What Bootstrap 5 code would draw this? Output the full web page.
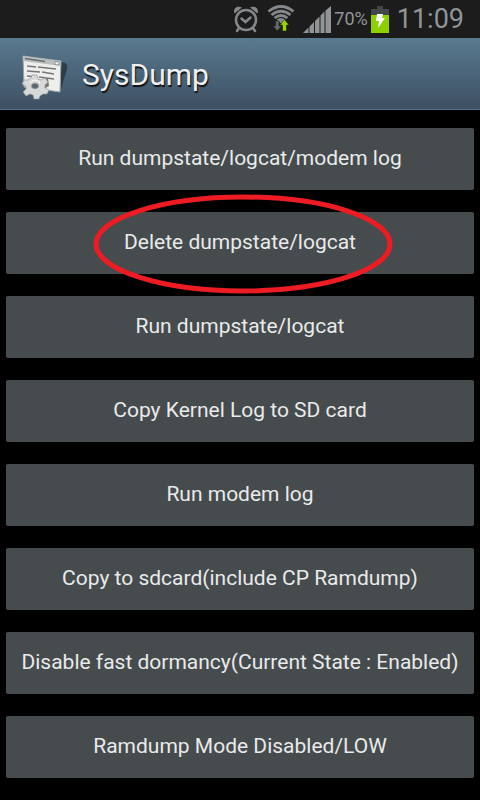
<!DOCTYPE html>
<html lang="en">
<head>
<meta charset="utf-8">
<meta name="viewport" content="width=device-width, initial-scale=1">
<title>SysDump</title>
<link href="https://cdn.jsdelivr.net/npm/bootstrap@5.3.0/dist/css/bootstrap.min.css" rel="stylesheet">
<style>
  body { background: #000; font-family: Roboto, "Liberation Sans", sans-serif; }
  .status-bar { background: #1c1c1c; color: #929598; height: 38px; padding: 0 16px; gap: 8px; line-height: 1; }
  .battery-group { gap: 3px; }
  .battery-text { font-size: 18px; }
  .clock { font-size: 27px; }
  .title-bar { background: linear-gradient(#587990, #3e5062); border-bottom: 1px solid #52708a; height: 72px; padding: 2px 20px 0; gap: 12px; }
  .title-bar h1 { font-size: 30px; line-height: 36px; color: #f0f0f0; text-shadow: 1px 2px 1px #111; }
  .actions { padding: 18px 6px; gap: 22px; }
  .btn-dump { --bs-btn-color: #e9eaea; --bs-btn-bg: #464b4e; --bs-btn-hover-color: #fff; --bs-btn-hover-bg: #555b5f;
    --bs-btn-active-color: #fff; --bs-btn-active-bg: #33b5e5; --bs-btn-border-width: 0; --bs-btn-border-radius: 2px;
    --bs-btn-font-size: 21px; --bs-btn-line-height: 30px; padding: 15px 8px 17px; }
  .highlight-ring { left: 50%; top: 50%; width: 300px; height: 100px; margin: -49px 0 0 -147px; pointer-events: none; z-index: 2; }
</style>
<script defer src="https://cdn.jsdelivr.net/npm/bootstrap@5.3.0/dist/js/bootstrap.bundle.min.js"></script>
</head>
<body>
<header>
  <div class="status-bar d-flex align-items-center justify-content-end">
    <svg width="26" height="28" viewBox="0 0 26 28" fill="none" stroke="#85888a" stroke-width="2.500" aria-label="Alarm" role="img">
      <circle cx="13" cy="15" r="10"/>
      <path d="M8.500 13.500l4 3.500 5-4.500M6 23l-2 3M20 23l2 3" stroke-linecap="round"/>
      <path d="M1.500 8.500C-.5 4 4 0 9 2.500zM24.500 8.500C26.500 4 22 0 17 2.500z" fill="#85888a" stroke="none"/>
    </svg>
    <svg width="28" height="28" viewBox="0 0 28 28" fill="none" aria-label="Wi-Fi" role="img">
      <g stroke="#85888a" stroke-width="2.800">
        <path d="M1.500 6.500Q14 -3.500 26.500 6.500M4.500 10Q14 2.500 23.500 10M7.500 13Q14 8 20.500 13"/>
      </g>
      <path d="M9.500 14.500Q14 11.500 18.500 14.500L14 18.500z" fill="#85888a"/>
      <path d="M8.500 16h3.500v5h2.500L10.250 26 6 21h2.500z" fill="#62676a" stroke="#1c1c1c" stroke-width=".5"/>
      <path d="M17.500 14.500l4.500 5.500h-2.500v6h-4v-6h-2.500z" fill="#99d600" stroke="#1c1c1c" stroke-width=".5"/>
    </svg>
    <div class="battery-group d-flex align-items-center">
      <svg width="28" height="27" viewBox="0 0 28 27" fill="#929598" aria-label="Signal" role="img">
        <path d="M0 27l5.500-5.500V27zM6.500 27v-6.500L11 16V27zM12 27V15l4.500-4.500v16.500zM17.500 27V9.500L21.500 5.500v21.500zM22.500 27V4.500L28 0v27z"/>
      </svg>
      <span class="battery-text">70%</span>
      <svg width="18" height="27" viewBox="0 0 18 27" aria-label="Charging" role="img">
        <path d="M0 3h6V0h6v3h6v6H0z" fill="#42464a"/>
        <path d="M0 9h18v18H0z" fill="#8fd000"/>
        <path d="M6 8h6l-1 4h3L7 22l1-7H5z" fill="#fff"/>
      </svg>
    </div>
    <time class="clock">11:09</time>
  </div>
  <div class="title-bar d-flex align-items-center">
    <svg width="50" height="50" viewBox="0 0 50 50" aria-hidden="true">
      <path d="M40 12q9 0 7 7l-6 20-8 3z" fill="#27323c" opacity=".8"/>
      <path d="M3 6l38 5-1 31-36-5z" fill="#eeeeed" stroke="#9aa2a6"/>
      <path d="M3 6l38 5v5L3 11z" fill="#b9bdbe"/>
      <path d="M5 8.500l20 3" stroke="#686e70" stroke-width="1.500"/>
      <path d="M35 11.500l4 .5v3l-4-.5z" fill="#f4f4f4" stroke="#747a7d" stroke-width=".7"/>
      <path d="M7 16l9 1m2 0l18 2M7 21l13 1m2 0l12 2M7 26l10 1m2 0l15 2" stroke="#777" stroke-width="1.500"/>
      <path d="M22 30l6-2 1 8-5 3z" fill="#777"/>
      <g transform="translate(15 36)" fill="#d7d9d9" stroke="#8d9396" stroke-width=".6">
        <path d="M-3-11h5l1 4 3 1 4-2 3 4-3 3 0 3 4 2-2 4-4 0-3 2-1 3h-5l-1-4-3-1-4 2-3-4 3-3 0-3-4-2 2-4 4 0 3-2z"/>
        <ellipse rx="3.500" ry="2.800" fill="#606970"/>
        <path d="M-5-3q5-6 10 0" fill="none" stroke="#fff" stroke-width="1"/>
      </g>
    </svg>
    <h1 class="m-0 fw-normal">SysDump</h1>
  </div>
</header>
<main class="actions d-grid">
  <button type="button" class="btn btn-dump">Run dumpstate/logcat/modem log</button>
  <div class="position-relative d-grid">
    <button type="button" class="btn btn-dump">Delete dumpstate/logcat</button>
    <svg class="highlight-ring position-absolute" viewBox="0 0 300 100" aria-hidden="true">
      <ellipse cx="150" cy="50" rx="147" ry="47" fill="none" stroke="#ed1c24" stroke-width="5"/>
    </svg>
  </div>
  <button type="button" class="btn btn-dump">Run dumpstate/logcat</button>
  <button type="button" class="btn btn-dump">Copy Kernel Log to SD card</button>
  <button type="button" class="btn btn-dump">Run modem log</button>
  <button type="button" class="btn btn-dump">Copy to sdcard(include CP Ramdump)</button>
  <button type="button" class="btn btn-dump">Disable fast dormancy(Current State : Enabled)</button>
  <button type="button" class="btn btn-dump">Ramdump Mode Disabled/LOW</button>
</main>
</body>
</html>
